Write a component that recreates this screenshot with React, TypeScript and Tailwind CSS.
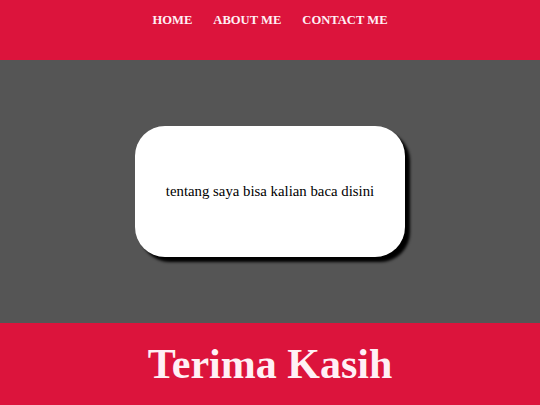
import React from 'react';

const serif = { fontFamily: '"Liberation Serif", "Times New Roman", serif' };

export default function App() {
    return (
        <div className="flex flex-col w-[540px] h-[405px] overflow-hidden" style={serif}>
            {/* Header / nav */}
            <header className="h-[60px] bg-[#dc143c] flex justify-center pt-[12px]">
                <nav className="flex gap-[21px] text-[12.6px] font-bold text-[#fff0f5] leading-[16px]">
                    <span>HOME</span>
                    <span>ABOUT ME</span>
                    <span>CONTACT ME</span>
                </nav>
            </header>

            {/* Main */}
            <main className="h-[263px] bg-[#555555] flex items-center justify-center">
                <div className="w-[270px] h-[131px] bg-white rounded-[30px] shadow-[5px_5px_3px_#000] flex items-center justify-center">
                    <p className="text-[14.8px] text-black">tentang saya bisa kalian baca disini</p>
                </div>
            </main>

            {/* Footer */}
            <footer className="flex-1 bg-[#dc143c] flex items-center justify-center">
                <h1 className="text-[42px] font-bold text-[#fff0f5] leading-none">Terima Kasih</h1>
            </footer>
        </div>
    );
}
